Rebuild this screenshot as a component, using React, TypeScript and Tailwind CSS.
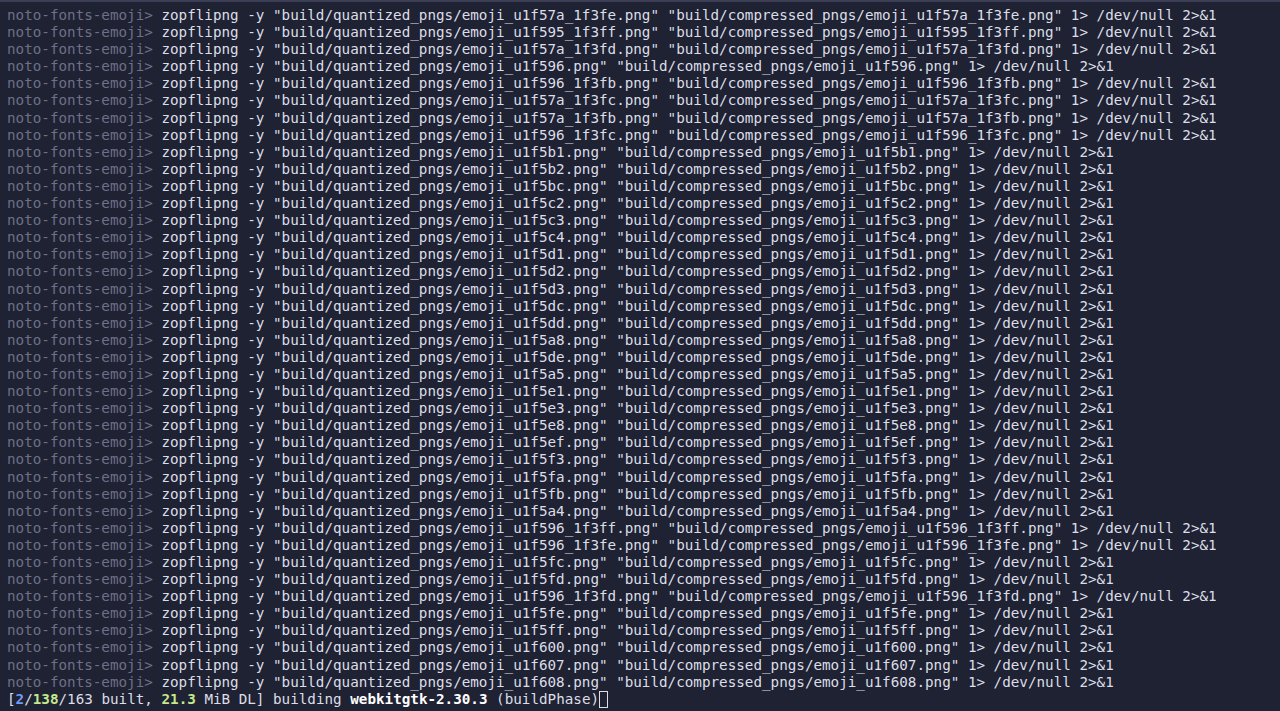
const files: [string, boolean][] = [
  ["u1f57a_1f3fe", true],
  ["u1f595_1f3ff", true],
  ["u1f57a_1f3fd", true],
  ["u1f596", false],
  ["u1f596_1f3fb", true],
  ["u1f57a_1f3fc", true],
  ["u1f57a_1f3fb", true],
  ["u1f596_1f3fc", true],
  ["u1f5b1", false],
  ["u1f5b2", false],
  ["u1f5bc", false],
  ["u1f5c2", false],
  ["u1f5c3", false],
  ["u1f5c4", false],
  ["u1f5d1", false],
  ["u1f5d2", false],
  ["u1f5d3", false],
  ["u1f5dc", false],
  ["u1f5dd", false],
  ["u1f5a8", false],
  ["u1f5de", false],
  ["u1f5a5", false],
  ["u1f5e1", false],
  ["u1f5e3", false],
  ["u1f5e8", false],
  ["u1f5ef", false],
  ["u1f5f3", false],
  ["u1f5fa", false],
  ["u1f5fb", false],
  ["u1f5a4", false],
  ["u1f596_1f3ff", true],
  ["u1f596_1f3fe", true],
  ["u1f5fc", false],
  ["u1f5fd", false],
  ["u1f596_1f3fd", true],
  ["u1f5fe", false],
  ["u1f5ff", false],
  ["u1f600", false],
  ["u1f607", false],
  ["u1f608", false],
]

export default function App() {
  return (
    <div
      className="w-[1280px] h-[711px] overflow-hidden bg-[#1f2233] border-t-2 border-[#3b3e54] pl-[7px] pt-[5px] text-[14.25px] leading-[17.1px] text-[#dcdee7] whitespace-pre"
      style={{ fontFamily: '"DejaVu Sans Mono", "Liberation Mono", monospace' }}
    >
      {files.map(([name]) => (
        <div key={name}>
          <span className="text-[#6d7086]">noto-fonts-emoji&gt; </span>
          {`zopflipng -y "build/quantized_pngs/emoji_${name}.png" "build/compressed_pngs/emoji_${name}.png" 1> /dev/null 2>&1`}
        </div>
      ))}
      <div className="flex items-center">
        <span>[</span>
        <span className="text-[#6f9ef8] font-bold">2</span>
        <span>/</span>
        <span className="text-[#c3e88d] font-bold">138</span>
        <span>/163 built, </span>
        <span className="text-[#c3e88d] font-bold">21.3</span>
        <span> MiB DL] building </span>
        <span className="font-bold text-white">webkitgtk-2.30.3</span>
        <span> (buildPhase)</span>
        <span className="inline-block w-[9px] h-[17px] border border-[#dcdee7]" />
      </div>
    </div>
  )
}
